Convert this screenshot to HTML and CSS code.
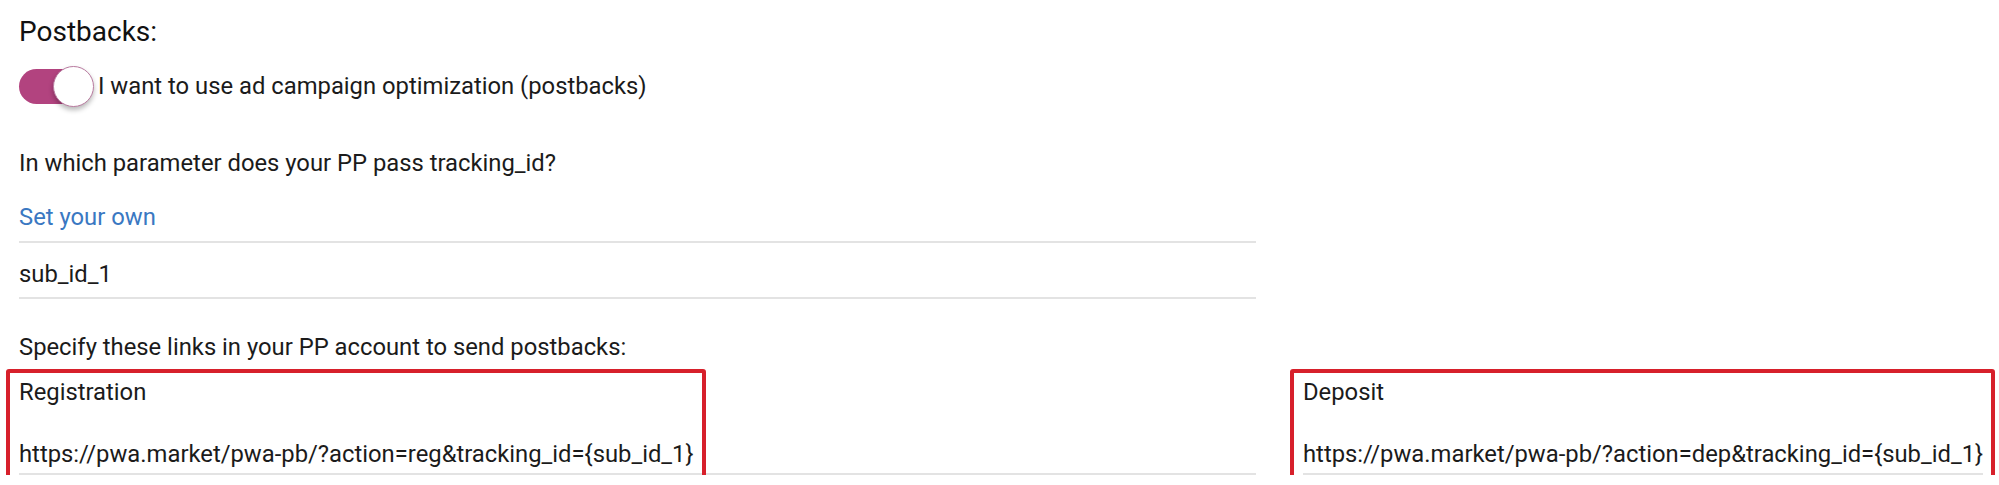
FILE: index.html
```html
<!DOCTYPE html>
<html lang="en">
<head>
<meta charset="utf-8">
<title>Postbacks</title>
<link rel="stylesheet" href="styles.css">
</head>
<body>
<div class="page">
  <h2 class="title">Postbacks:</h2>
  <div class="toggle-row">
    <span class="toggle"><span class="track"></span><span class="knob"></span></span>
    <span class="toggle-label">I want to use ad campaign optimization (postbacks)</span>
  </div>
  <p class="question">In which parameter does your PP pass tracking_id?</p>
  <div class="select-line"><a class="link">Set your own</a></div>
  <div class="input-line">sub_id_1</div>
  <p class="question specify">Specify these links in your PP account to send postbacks:</p>
  <div class="links">
    <div class="field">
      <div class="annot">
        <div class="field-label">Registration</div>
        <div class="field-value">https://pwa.market/pwa-pb/?action=reg&amp;tracking_id={sub_id_1}</div>
      </div>
    </div>
    <div class="field">
      <div class="annot">
        <div class="field-label">Deposit</div>
        <div class="field-value">https://pwa.market/pwa-pb/?action=dep&amp;tracking_id={sub_id_1}</div>
      </div>
    </div>
  </div>
</div>
</body>
</html>
```

FILE: styles.css
```css
* { box-sizing: border-box; }
html, body { margin: 0; padding: 0; background: #fff; }
body {
  font-family: Roboto, "Liberation Sans", Arial, sans-serif;
  color: #1b1b1b;
  font-size: 23.8px;
  line-height: 28px;
}
.page {
  padding: 0 20px 0 19px;
}
.title {
  margin: 15px 0 0;
  font-size: 28px;
  line-height: 34px;
  font-weight: 400;
  color: #111;
}
.toggle-row {
  margin-top: 16px;
  height: 42px;
  display: flex;
  align-items: center;
  gap: 4px;
}
.toggle {
  position: relative;
  width: 75px;
  height: 41px;
  flex: none;
}
.track {
  position: absolute;
  left: 0;
  top: 3px;
  width: 66px;
  height: 35px;
  border-radius: 18px;
  background: #b2437f;
}
.knob {
  position: absolute;
  right: 0;
  top: 0;
  width: 41px;
  height: 41px;
  border-radius: 50%;
  background: #fff;
  border: 1.5px solid #b97ba0;
  box-shadow: 0 3px 5px rgba(0, 0, 0, 0.28);
}
.toggle-label { white-space: nowrap; }
.question {
  margin: 42px 0 0;
}
.select-line {
  margin-top: 26px;
  width: 1237px;
  padding-bottom: 10px;
  border-bottom: 2px solid #e3e3e3;
}
.link {
  color: #3a78c2;
  cursor: pointer;
}
.input-line {
  margin-top: 17px;
  width: 1237px;
  padding-bottom: 9px;
  border-bottom: 2px solid #e3e3e3;
}
.specify { margin-top: 34px; }
.links {
  display: grid;
  grid-template-columns: 1237px 1fr;
  column-gap: 47px;
  margin-top: 17px;
}
.field {
  border-bottom: 2px solid #e3e3e3;
}
.annot {
  display: inline-block;
  position: relative;
  padding: 0 0 5px 0;
}
.annot::after {
  content: "";
  position: absolute;
  left: -13px;
  right: -12px;
  top: -9px;
  bottom: -7px;
  border: 4px solid #d7202b;
  border-radius: 3px;
}
.field-label { line-height: 28px; }
.field-value {
  margin-top: 34px;
  white-space: nowrap;
}
```
